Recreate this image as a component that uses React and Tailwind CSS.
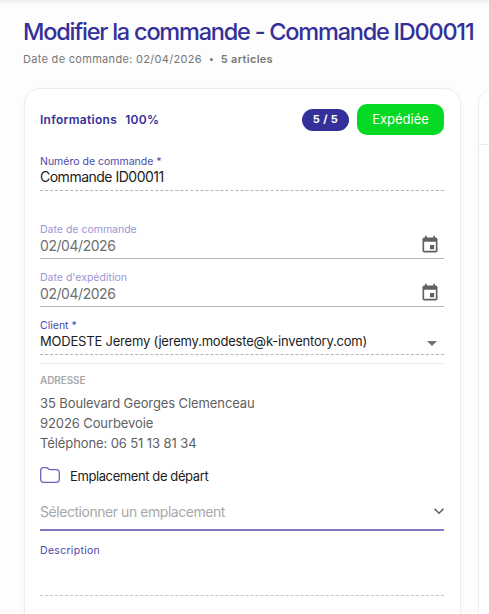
import React from 'react';

function CalendarIcon() {
    return (
        <svg width="20" height="20" viewBox="0 0 24 24" className="fill-[#616161] shrink-0">
            <path d="M17 12h-5v5h5v-5zM16 1v2H8V1H6v2H5c-1.11 0-1.99.9-1.99 2L3 19c0 1.1.89 2 2 2h14c1.1 0 2-.9 2-2V5c0-1.1-.9-2-2-2h-1V1h-2zm3 18H5V8h14v11z" />
        </svg>
    );
}

function DateField({ label, value }) {
    return (
        <div className="h-[37px] border-b border-[#b5b5b5] relative">
            <div className="text-[10.5px] leading-[14px] text-[#9a96d2] pt-[1px] box-content">{label}</div>
            <div className="text-[14px] leading-[17px] text-[#6f6f6f] -tracking-[0.45px]">{value}</div>
            <div className="absolute right-[4px] top-[13px]"><CalendarIcon /></div>
        </div>
    );
}

export default function App() {
    return (
        <div className="w-[489px] h-[614px] overflow-hidden bg-[#fdfdfd] relative font-['Inter',sans-serif]">
            <div className="h-[4px] bg-gradient-to-b from-[#ececec] to-[#fdfdfd]"></div>

            <div className="pl-[23px] pt-[13px] whitespace-nowrap">
                <h1 className="text-[23.5px] leading-[30px] font-[550] text-[#34309a] -tracking-[1.22px]">Modifier la commande - Commande ID00011</h1>
                <div className="flex items-center text-[11px] leading-[14px] text-[#777] mt-[5px] tracking-[0.3px]">
                    <span>Date de commande: 02/04/2026</span>
                    <span className="w-[3px] h-[3px] rounded-full bg-[#777] mx-[8px]"></span>
                    <span className="font-semibold">5 articles</span>
                </div>
            </div>

            <div className="flex gap-[17px] pl-[24px] mt-[22px]">
                <div className="w-[437px] shrink-0 h-[600px] bg-white border border-[#ececec] rounded-t-[16px] pl-[15px] pr-[16px] pt-[15px] shadow-[0_1px_4px_rgba(0,0,0,0.03)]">
                    <div className="flex items-center justify-between h-[31px]">
                        <div className="flex gap-[8px] text-[12px] font-semibold text-[#34309a] tracking-[0.3px]">
                            <span>Informations</span>
                            <span>100%</span>
                        </div>
                        <div className="flex items-center gap-[8px]">
                            <div className="w-[47px] h-[22px] rounded-full bg-[#34309a] text-white text-[11px] font-bold flex items-center justify-center tracking-[0.4px]">5 / 5</div>
                            <div className="w-[87px] h-[31px] rounded-[10px] bg-[#04d924] text-white text-[13px] flex items-center justify-center">Expédiée</div>
                        </div>
                    </div>

                    <div className="mt-[19px] h-[37px] border-b border-dashed border-[#b5b5b5]">
                        <div className="text-[10.5px] leading-[14px] text-[#4c47a8] pt-[1px] -mb-[1px] box-content">Numéro de commande *</div>
                        <div className="text-[14px] leading-[17px] text-[#1c1c1c] -tracking-[0.5px]">Commande ID00011</div>
                    </div>

                    <div className="mt-[31px]"><DateField label="Date de commande" value="02/04/2026" /></div>
                    <div className="mt-[11px]"><DateField label="Date d'expédition" value="02/04/2026" /></div>

                    <div className="relative mt-[11px] h-[37px] border-b border-dashed border-[#b5b5b5]">
                        <div className="text-[10.5px] leading-[14px] text-[#4c47a8] pt-[1px] box-content">Client *</div>
                        <div className="text-[13px] leading-[17px] text-[#1c1c1c] -tracking-[0.2px]">MODESTE Jeremy (jeremy.modeste@k-inventory.com)</div>
                        <div className="absolute right-[7px] top-[23px] w-0 h-0 border-x-[5px] border-x-transparent border-t-[5px] border-t-[#6f6f6f]"></div>
                    </div>

                    <div className="mt-[8px] border-t border-[#ececec] pt-[9px]">
                        <div className="text-[10px] leading-[14px] font-semibold text-[#a8a8a8] -tracking-[0.1px]">ADRESSE</div>
                        <div className="mt-[6px] text-[13px] leading-[20px] text-[#5f5f5f] -tracking-[0.1px]">
                            <div>35 Boulevard Georges Clemenceau</div>
                            <div>92026 Courbevoie</div>
                            <div>Téléphone: 06 51 13 81 34</div>
                        </div>
                    </div>

                    <div className="flex items-center gap-[10px] mt-[12px] h-[20px]">
                        <svg width="20" height="16" viewBox="0 0 20 16" fill="none" className="stroke-[#6763b8] stroke-[1.3] shrink-0">
                            <path d="M.7 3.4A2.7 2.7 0 0 1 3.4.7h2.9c.7 0 1.3.3 1.8.8l.5.5c.4.4.9.6 1.4.6h6.6a2.7 2.7 0 0 1 2.7 2.7v7.3a2.7 2.7 0 0 1-2.7 2.7H3.4a2.7 2.7 0 0 1-2.7-2.7z" />
                        </svg>
                        <span className="text-[13px] leading-[18px] pt-[2px] text-[#1c1c1c] -tracking-[0.4px]">Emplacement de départ</span>
                    </div>

                    <div className="mt-[8px] h-[38px] border-b-2 border-[#7f7bc6] flex items-center justify-between">
                        <span className="text-[14px] text-[#a8a8a8] -tracking-[0.45px]">Sélectionner un emplacement</span>
                        <svg width="12" height="12" viewBox="0 0 12 12" fill="none" className="stroke-[#5f5f5f] stroke-[1.6] -mr-[1px]">
                            <path d="M1.5 3.8 6 8.2l4.5-4.4" />
                        </svg>
                    </div>

                    <div className="mt-[12px] h-[53px] border-b border-dashed border-[#c4c4c4]">
                        <div className="text-[10.5px] leading-[14px] tracking-[0.3px] text-[#4c47a8] pt-[1px] box-content">Description</div>
                    </div>
                </div>

                <div className="w-[300px] shrink-0 h-[600px] bg-white border border-[#ececec] rounded-t-[16px]">
                    <div className="h-[56px] border-b border-[#ececec]"></div>
                </div>
            </div>
        </div>
    );
}
